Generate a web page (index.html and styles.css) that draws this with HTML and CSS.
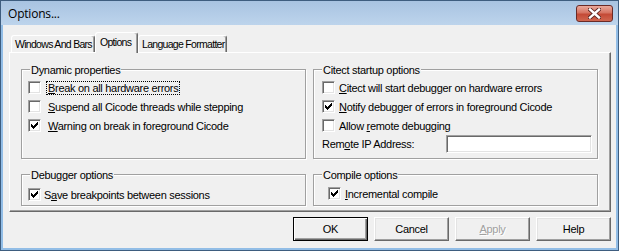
FILE: index.html
```html
<!DOCTYPE html>
<html lang="en">
<head>
    <meta charset="UTF-8">
    <title>Options...</title>
    <link rel="stylesheet" href="styles.css">
</head>
<body>
<div class="window">
    <div class="titlebar">
        <span class="title">Options...</span>
        <span class="close">
            <svg width="13" height="11" viewBox="0 0 13 11">
                <path d="M2 1.5 L11 9.5 M11 1.5 L2 9.5" stroke="#5b2420" stroke-width="4.2" stroke-linecap="square"/>
                <path d="M2 1.5 L11 9.5 M11 1.5 L2 9.5" stroke="#fff" stroke-width="2.4" stroke-linecap="square"/>
            </svg>
        </span>
    </div>
    <div class="client">
        <div class="tabs">
            <div class="tab tab-first">Windows And Bars</div>
            <div class="tab tab-active">Options</div>
            <div class="tab tab-lang">Language Formatter</div>
        </div>
        <div class="panel">
            <!-- haut gauche -->
            <div class="group group-dyn">
                <div class="group-title">Dynamic properties</div>
                <div class="rows">
                    <div class="check"><span class="box"></span><span class="label"><span class="focus"><u>B</u>reak on all hardware errors</span></span></div>
                    <div class="check"><span class="box"></span><span class="label"><u>S</u>uspend all Cicode threads while stepping</span></div>
                    <div class="check"><span class="box"><svg width="11" height="11" viewBox="0 0 11 11"><path d="M8 2h1v3h-1z M7 3h1v3h-1z M6 4h1v3h-1z M5 5h1v3h-1z M4 6h1v3h-1z M3 5h1v3h-1z M2 4h1v3h-1z"/></svg></span><span class="label"><u>W</u>arning on break in foreground Cicode</span></div>
                </div>
            </div>
            <!-- haut droite -->
            <div class="group group-citect">
                <div class="group-title">Citect startup options</div>
                <div class="rows">
                    <div class="check"><span class="box"></span><span class="label"><u>C</u>itect will start debugger on hardware errors</span></div>
                    <div class="check"><span class="box"><svg width="11" height="11" viewBox="0 0 11 11"><path d="M8 2h1v3h-1z M7 3h1v3h-1z M6 4h1v3h-1z M5 5h1v3h-1z M4 6h1v3h-1z M3 5h1v3h-1z M2 4h1v3h-1z"/></svg></span><span class="label"><u>N</u>otify debugger of errors in foreground Cicode</span></div>
                    <div class="check"><span class="box"></span><span class="label">Allow <u>r</u>emote debugging</span></div>
                    <div class="remote">
                        <span class="remote-label">Rem<u>o</u>te IP Address:</span>
                        <span class="edit"></span>
                    </div>
                </div>
            </div>
            <!-- bas gauche -->
            <div class="group group-debug">
                <div class="group-title">Debugger options</div>
                <div class="rows">
                    <div class="check"><span class="box"><svg width="11" height="11" viewBox="0 0 11 11"><path d="M8 2h1v3h-1z M7 3h1v3h-1z M6 4h1v3h-1z M5 5h1v3h-1z M4 6h1v3h-1z M3 5h1v3h-1z M2 4h1v3h-1z"/></svg></span><span class="label">S<u>a</u>ve breakpoints between sessions</span></div>
                </div>
            </div>
            <!-- bas droite -->
            <div class="group group-compile">
                <div class="group-title">Compile options</div>
                <div class="rows">
                    <div class="check"><span class="box"><svg width="11" height="11" viewBox="0 0 11 11"><path d="M8 2h1v3h-1z M7 3h1v3h-1z M6 4h1v3h-1z M5 5h1v3h-1z M4 6h1v3h-1z M3 5h1v3h-1z M2 4h1v3h-1z"/></svg></span><span class="label"><u>I</u>ncremental compile</span></div>
                </div>
            </div>
        </div>
        <div class="buttons">
            <button class="btn btn-default">OK</button>
            <button class="btn">Cancel</button>
            <button class="btn btn-disabled"><u>A</u>pply</button>
            <button class="btn">Help</button>
        </div>
    </div>
</div>
</body>
</html>
```

FILE: styles.css
```css
* {
    box-sizing: border-box;
}
body {
    margin: 0;
    font-family: "Liberation Sans", Arial, sans-serif;
    font-size: 11px;
    letter-spacing: -0.3px;
    color: #000;
}
.window {
    width: 619px;
    height: 251px;
    border: 1px solid #3e5d7f;
    padding: 0 2px 2px;
    background: linear-gradient(#a8c3e1, #bdd4ec 24px, #92bde6 24px);
}
.titlebar {
    height: 24px;
    display: flex;
    justify-content: space-between;
    align-items: flex-start;
    padding: 4px 3px 0 5px;
}
.title {
    font-family: "Open Sans", sans-serif;
    font-size: 12px;
    line-height: 17px;
    letter-spacing: -0.2px;
}
.close {
    width: 37px;
    height: 17px;
    border: 1px solid #6a2a26;
    border-radius: 3px;
    background: linear-gradient(#eaa99c, #d67462 45%, #c44a36 55%, #d0664f);
    display: flex;
    align-items: center;
    justify-content: center;
}
.client {
    height: 223px;
    background: #f0f0f0;
    padding: 7px 5px 0 6px;
}

/* onglets */
.tabs {
    display: flex;
    align-items: flex-end;
    height: 20px;
    padding-left: 2px;
    font-size: 10.5px;
    letter-spacing: -0.7px;
}
.tab {
    height: 17px;
    line-height: 16px;
    padding-left: 3px;
    border: 1px solid;
    border-color: #fff #696969 transparent #fff;
    border-bottom: 0;
    border-radius: 3px 3px 0 0;
    box-shadow: inset -1px 0 #a0a0a0;
    white-space: nowrap;
}
.tab-first {
    width: 84px;
}
.tab-active {
    width: 43px;
    height: 21px;
    line-height: 18px;
    padding-left: 4px;
    margin-bottom: -1px;
    background: #f0f0f0;
    position: relative;
    z-index: 1;
}
.tab-lang {
    width: 89px;
}
.panel {
    height: 160px;
    border: 1px solid;
    border-color: #fff #696969 #696969 #fff;
    box-shadow: inset -1px -1px #a0a0a0;
    padding: 16px 0 0 11px;
    display: grid;
    grid-template-columns: 285px 285px;
    grid-template-rows: 90px 32px;
    column-gap: 7px;
    row-gap: 15px;
}

/* groupes */
.group {
    border: 1px solid #a0a0a0;
    box-shadow: inset 1px 1px #fff, 1px 1px #fff;
    padding-left: 6px;
}
.group-title {
    width: fit-content;
    margin: -6px 0 0 2px;
    padding: 0 1px;
    line-height: 13px;
    background: #f0f0f0;
    white-space: nowrap;
}
.rows {
    padding-top: 1px;
}
.check {
    display: flex;
    align-items: center;
    height: 19px;
    white-space: nowrap;
}
.box {
    flex: none;
    width: 13px;
    height: 13px;
    border: 1px solid;
    border-color: #a0a0a0 #fff #fff #a0a0a0;
    box-shadow: inset 1px 1px #696969, inset -1px -1px #e3e3e3;
    background: #fff;
}
.box svg {
    display: block;
    shape-rendering: crispEdges;
}
.label {
    margin-left: 7px;
}
.focus {
    outline: 1px dotted #000;
    padding: 0 1px;
    margin-left: -1px;
}
.group-citect {
    padding-left: 8px;
}
.group-citect .group-title {
    margin-left: 0;
}
.group-citect .label {
    margin-left: 4px;
}
.remote {
    display: flex;
    align-items: center;
    height: 18px;
}
.remote-label {
    width: 124px;
}
.edit {
    width: 146px;
    height: 18px;
    border: 1px solid;
    border-color: #a0a0a0 #fff #fff #a0a0a0;
    box-shadow: inset 1px 1px #696969, inset -1px -1px #e3e3e3;
    background: #fff;
}
.group-debug .rows {
    padding-top: 3px;
}
.group-debug .label {
    margin-left: 3px;
}
.group-compile {
    padding-left: 14px;
}
.group-compile .group-title {
    margin-left: -6px;
}
.group-compile .rows {
    padding-top: 2px;
}
.group-compile .label {
    margin-left: 4px;
}

/* boutons */
.buttons {
    display: flex;
    justify-content: flex-end;
    gap: 6px;
    margin-top: 5px;
}
.btn {
    width: 75px;
    height: 24px;
    padding: 0;
    font: inherit;
    letter-spacing: inherit;
    color: #000;
    background: #f0f0f0;
    border: 1px solid;
    border-color: #fff #696969 #696969 #fff;
    box-shadow: inset -1px -1px #a0a0a0, inset 1px 1px #e3e3e3;
}
.btn-default {
    border-color: #000;
    box-shadow: inset 1px 1px #fff, inset -1px -1px #696969, inset -2px -2px #a0a0a0;
}
.btn-disabled {
    color: #a0a0a0;
    text-shadow: 1px 1px #fff;
}
```
